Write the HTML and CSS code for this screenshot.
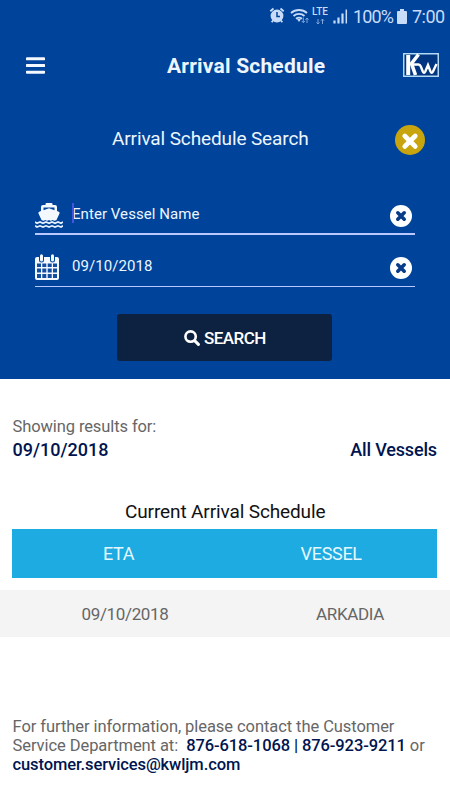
FILE: index.html
```html
<!DOCTYPE html>
<html lang="en">
<head>
<meta charset="utf-8">
<title>Arrival Schedule</title>
<link rel="stylesheet" href="styles.css">
</head>
<body>
<section class="hero">
  <div class="status">
    <svg class="status-icons" width="90" height="20" viewBox="0 0 90 20">
      <g fill="none" stroke="#c8dcfa">
        <circle cx="8" cy="10" r="6.400" fill="#c8dcfa" stroke="none"/>
        <path d="M1.300 5.200 4.500 2.500M11.500 2.500l3.200 2.700M4 14.500l-1.300 1.800M12 14.500l1.300 1.800" stroke-width="1.800"/>
        <path d="M8 6v4.500h3" stroke="#00439a" stroke-width="1.500"/>
        <path d="M22 7c4.500-4 11.500-4 16 0M24.500 10c3.200-2.800 7.800-2.800 11 0M27 12.800c1.900-1.500 4.100-1.500 6 0" stroke-width="1.800"/>
        <path d="M28 13h4L30 16z" fill="#c8dcfa" stroke="none"/>
        <path d="M34.300 11.500v5M32.800 15l1.500 1.700 1.500-1.700M38 17v-5M36.500 13.700l1.500-1.700 1.500 1.700M49 13v5M47.500 16.300l1.500 1.700 1.500-1.700M53.500 18v-5M52 14.700l1.500-1.700 1.500 1.700" stroke="#7fa5da"/>
        <path d="M65.500 17.500v-3M69.500 17.500v-6M73.500 17.500V7.500" stroke-width="2.200"/>
        <path d="M77.300 17.500V3.500" stroke-width="1.500"/>
      </g>
    </svg>
    <span class="lte">LTE</span>
    <span class="percent">100%</span>
    <svg class="battery" width="10" height="15" viewBox="0 0 10 15"><path d="M3 0h4v2h2q1 0 1 1v11q0 1-1 1H1q-1 0-1-1V3q0-1 1-1h2z" fill="#c8dcfa"/></svg>
    <span class="time">7:00</span>
  </div>
  <header class="bar">
    <svg class="menu" width="19" height="17" viewBox="0 0 19 17"><path d="M1 1.800h17M1 8.500h17M1 15.200h17" stroke="#f4f9ff" stroke-width="2.900" stroke-linecap="round"/></svg>
    <h1 class="title">Arrival Schedule</h1>
    <svg class="logo" width="36" height="24" viewBox="0 0 36 24">
      <path d="M.75.750h34.500v22.500H.75z" fill="#00357f" stroke="#b3daf5" stroke-width="1.500"/>
      <g fill="none" stroke="#fff">
        <path d="M5.200 2v20" stroke-width="4"/>
        <path d="M15.500 1.500 8.500 10.500 12.500 22" stroke-width="3.600"/>
        <path d="M10 11.500h5.500q1.500 0 2.300 2l2 5q1.200 2.500 2.500 0l2.700-6.500 2.500 6.500q1.200 2.500 2.500 0L33.500 11" stroke-width="2.400"/>
      </g>
    </svg>
  </header>
  <div class="panel-head">
    <h2 class="subtitle">Arrival Schedule Search</h2>
    <svg class="close" width="30" height="30" viewBox="0 0 30 30"><circle cx="15" cy="15" r="15" fill="#c8a50f"/><path d="m9.800 11 10.400 10.400M20.200 11 9.800 21.400" stroke="#fff" stroke-width="4.800" stroke-linecap="round"/></svg>
  </div>
  <div class="field">
    <svg class="ship" width="28" height="25" viewBox="0 0 28 25">
      <path d="M10.500 2V1q0-1 1-1h5q1 0 1 1v1H20q2 0 2 2v4l1.800.8q1.200.6.700 1.700L21.500 17q-2 1.500-3.800 0-2 1.500-3.700 0-2 1.500-3.700 0-2 1.500-3.800 0L3.500 10.500q-.5-1.100.7-1.700L6 8V4q0-2 2-2zM8.500 4.500v2.700L14 5.200l5.500 2V4.500z" fill="#f4f9ff" fill-rule="evenodd"/>
      <path d="m0 19 2 1.300L5 19l3 1.300 3-1.300 3 1.300 3-1.300 3 1.300 3-1.300 3 1.300 2-1.300M0 22.800l2 1.200 3-1.200L8 24l3-1.200 3 1.200 3-1.200 3 1.200 3-1.200 3 1.200 2-1.200" fill="none" stroke="#e6f3ff" stroke-width="1.700"/>
    </svg>
    <span class="caret"></span>
    <span class="value">Enter Vessel Name</span>
    <svg class="clear" width="22" height="22" viewBox="0 0 22 22"><circle cx="11" cy="11" r="11" fill="#fff"/><path d="m7.800 7.800 6.400 6.400M14.200 7.800l-6.400 6.400" stroke="#083c88" stroke-width="3.600" stroke-linecap="round"/></svg>
  </div>
  <div class="field date">
    <svg class="calendar" width="24" height="26" viewBox="0 0 24 26">
      <path d="M2 3h20q2 0 2 2v19q0 2-2 2H2q-2 0-2-2V5q0-2 2-2z" fill="#f4f9ff"/>
      <path d="M2 9.500h4v3.500H2zM7.300 9.500h4v3.500h-4zM12.700 9.500h4v3.500h-4zM18 9.500h4v3.500h-4zM2 14.500h4v4H2zM7.300 14.500h4v4h-4zM12.700 14.500h4v4h-4zM18 14.500h4v4h-4zM2 20h4v4H2zM7.300 20h4v4h-4zM12.700 20h4v4h-4zM18 20h4v4h-4z" fill="#124d9f"/>
      <path d="M6.500 2v4M17.500 2v4" stroke="#00439a" stroke-width="5" stroke-linecap="round"/>
      <path d="M6.500 1.800v4.200M17.500 1.800v4.200" stroke="#f4f9ff" stroke-width="3" stroke-linecap="round"/>
    </svg>
    <span class="value">09/10/2018</span>
    <svg class="clear" width="22" height="22" viewBox="0 0 22 22"><circle cx="11" cy="11" r="11" fill="#fff"/><path d="m7.800 7.800 6.400 6.400M14.200 7.800l-6.400 6.400" stroke="#083c88" stroke-width="3.600" stroke-linecap="round"/></svg>
  </div>
  <button class="search" type="button">
    <svg width="16" height="16" viewBox="0 0 17 17"><g fill="none" stroke="#fff"><circle cx="7" cy="7" r="5.500" stroke-width="2.800"/><path d="m11.300 11.300 4 4" stroke-width="3.200" stroke-linecap="round"/></g></svg>
    <span>SEARCH</span>
  </button>
</section>
<main>
  <section class="summary">
    <p class="label">Showing results for:</p>
    <div class="filters"><strong class="day">09/10/2018</strong><strong class="all">All Vessels</strong></div>
  </section>
  <h2 class="caption">Current Arrival Schedule</h2>
  <div class="thead"><span class="eta">ETA</span><span class="vessel">VESSEL</span></div>
  <div class="row"><span class="cell-date">09/10/2018</span><span class="cell-name">ARKADIA</span></div>
  <footer class="contact">
    <div class="line1">For further information, please contact the Customer</div>
    <div class="line2">Service Department at:&nbsp; <b>876-618-1068 | 876-923-9211</b> or</div>
    <div class="line3"><b>customer.services@kwljm.com</b></div>
  </footer>
</main>
</body>
</html>
```
FILE: styles.css
```css
* { box-sizing: border-box; }
body { margin: 0; width: 450px; height: 800px; overflow: hidden; background: #fff; font-family: Roboto, sans-serif; color: #666; }
h1, h2, p { margin: 0; font-weight: 400; }
svg { display: block; flex: none; }
span, strong, h1, h2, p, b { white-space: nowrap; }

.hero { height: 378.500px; background: #00439a; color: #edf6ff; }
.status { position: relative; display: flex; align-items: center; height: 32px; padding-left: 269px; color: #c8dcfa; }
.status-icons { margin-top: -1px; }
.lte { position: absolute; left: 312px; top: 6px; font-size: 10px; line-height: 12px; font-weight: 500; }
.percent { width: 38px; margin-left: -6px; font-size: 18px; letter-spacing: -0.9px; }
.battery { margin-left: 6px; }
.time { margin-left: 5px; font-size: 18px; letter-spacing: -0.5px; }

.bar { display: flex; align-items: center; height: 66px; padding: 0 11px 0 26px; }
.title { width: 160px; margin-left: 122px; padding-top: 2px; font-size: 21px; font-weight: 700; letter-spacing: 0.2px; }
.logo { margin-left: 76px; }
.panel-head { display: flex; align-items: center; height: 84px; padding-left: 112px; }
.subtitle { width: 284px; padding-bottom: 4px; font-size: 19px; letter-spacing: -0.12px; }
.close { margin-left: -1px; }

.field { position: relative; display: flex; align-items: center; width: 380px; height: 40px; margin: 13px 0 0 35px; border-bottom: 2px solid #b9c9ff; }
.date { margin-top: 11px; height: 41px; border-bottom-width: 1px; }
.value { width: 318px; font-size: 15px; letter-spacing: 0.06px; }
.clear { margin-top: 3px; }
.ship { margin-right: 9px; margin-top: 3px; }
.calendar { margin-right: 13px; margin-top: 2px; }
.caret { position: absolute; left: 37px; top: 8px; width: 2px; height: 20px; background: #4356e0; }

.search { display: flex; align-items: center; justify-content: center; gap: 4px; width: 215px; height: 47px; margin: 27px 0 0 117.4px; padding: 0; border: 0; border-radius: 3px; background: #0d2240; color: #fff; font: 500 17px Roboto, sans-serif; letter-spacing: -0.5px; }

.summary { padding: 37.5px 13px 0 12.5px; }
.label { font-size: 16.5px; line-height: 22px; letter-spacing: -0.1px; }
.filters { display: flex; justify-content: space-between; font-size: 18px; line-height: 24px; color: #001450; }
.day, .all, b { font-weight: 500; }
.all { letter-spacing: -0.15px; }
.caption { height: 24px; margin-top: 38px; padding-left: 125px; font-size: 19px; line-height: 24px; letter-spacing: -0.12px; color: #111; }
.thead { display: grid; grid-template-columns: 1fr 1fr; align-items: center; justify-items: center; height: 49px; margin: 5px 12.6px 12px 12.4px; background: #1dabe1; color: #e5f8ff; font-size: 18px; letter-spacing: -0.3px; }
.row { display: grid; grid-template-columns: 250px 200px; align-items: center; justify-items: center; height: 47px; background: #f4f4f4; font-size: 17px; letter-spacing: -0.35px; }
.contact { padding: 80px 0 0 12.5px; font-size: 16.5px; line-height: 19px; letter-spacing: -0.07px; white-space: nowrap; }
.contact b { color: #001450; letter-spacing: -0.1px; }
```
